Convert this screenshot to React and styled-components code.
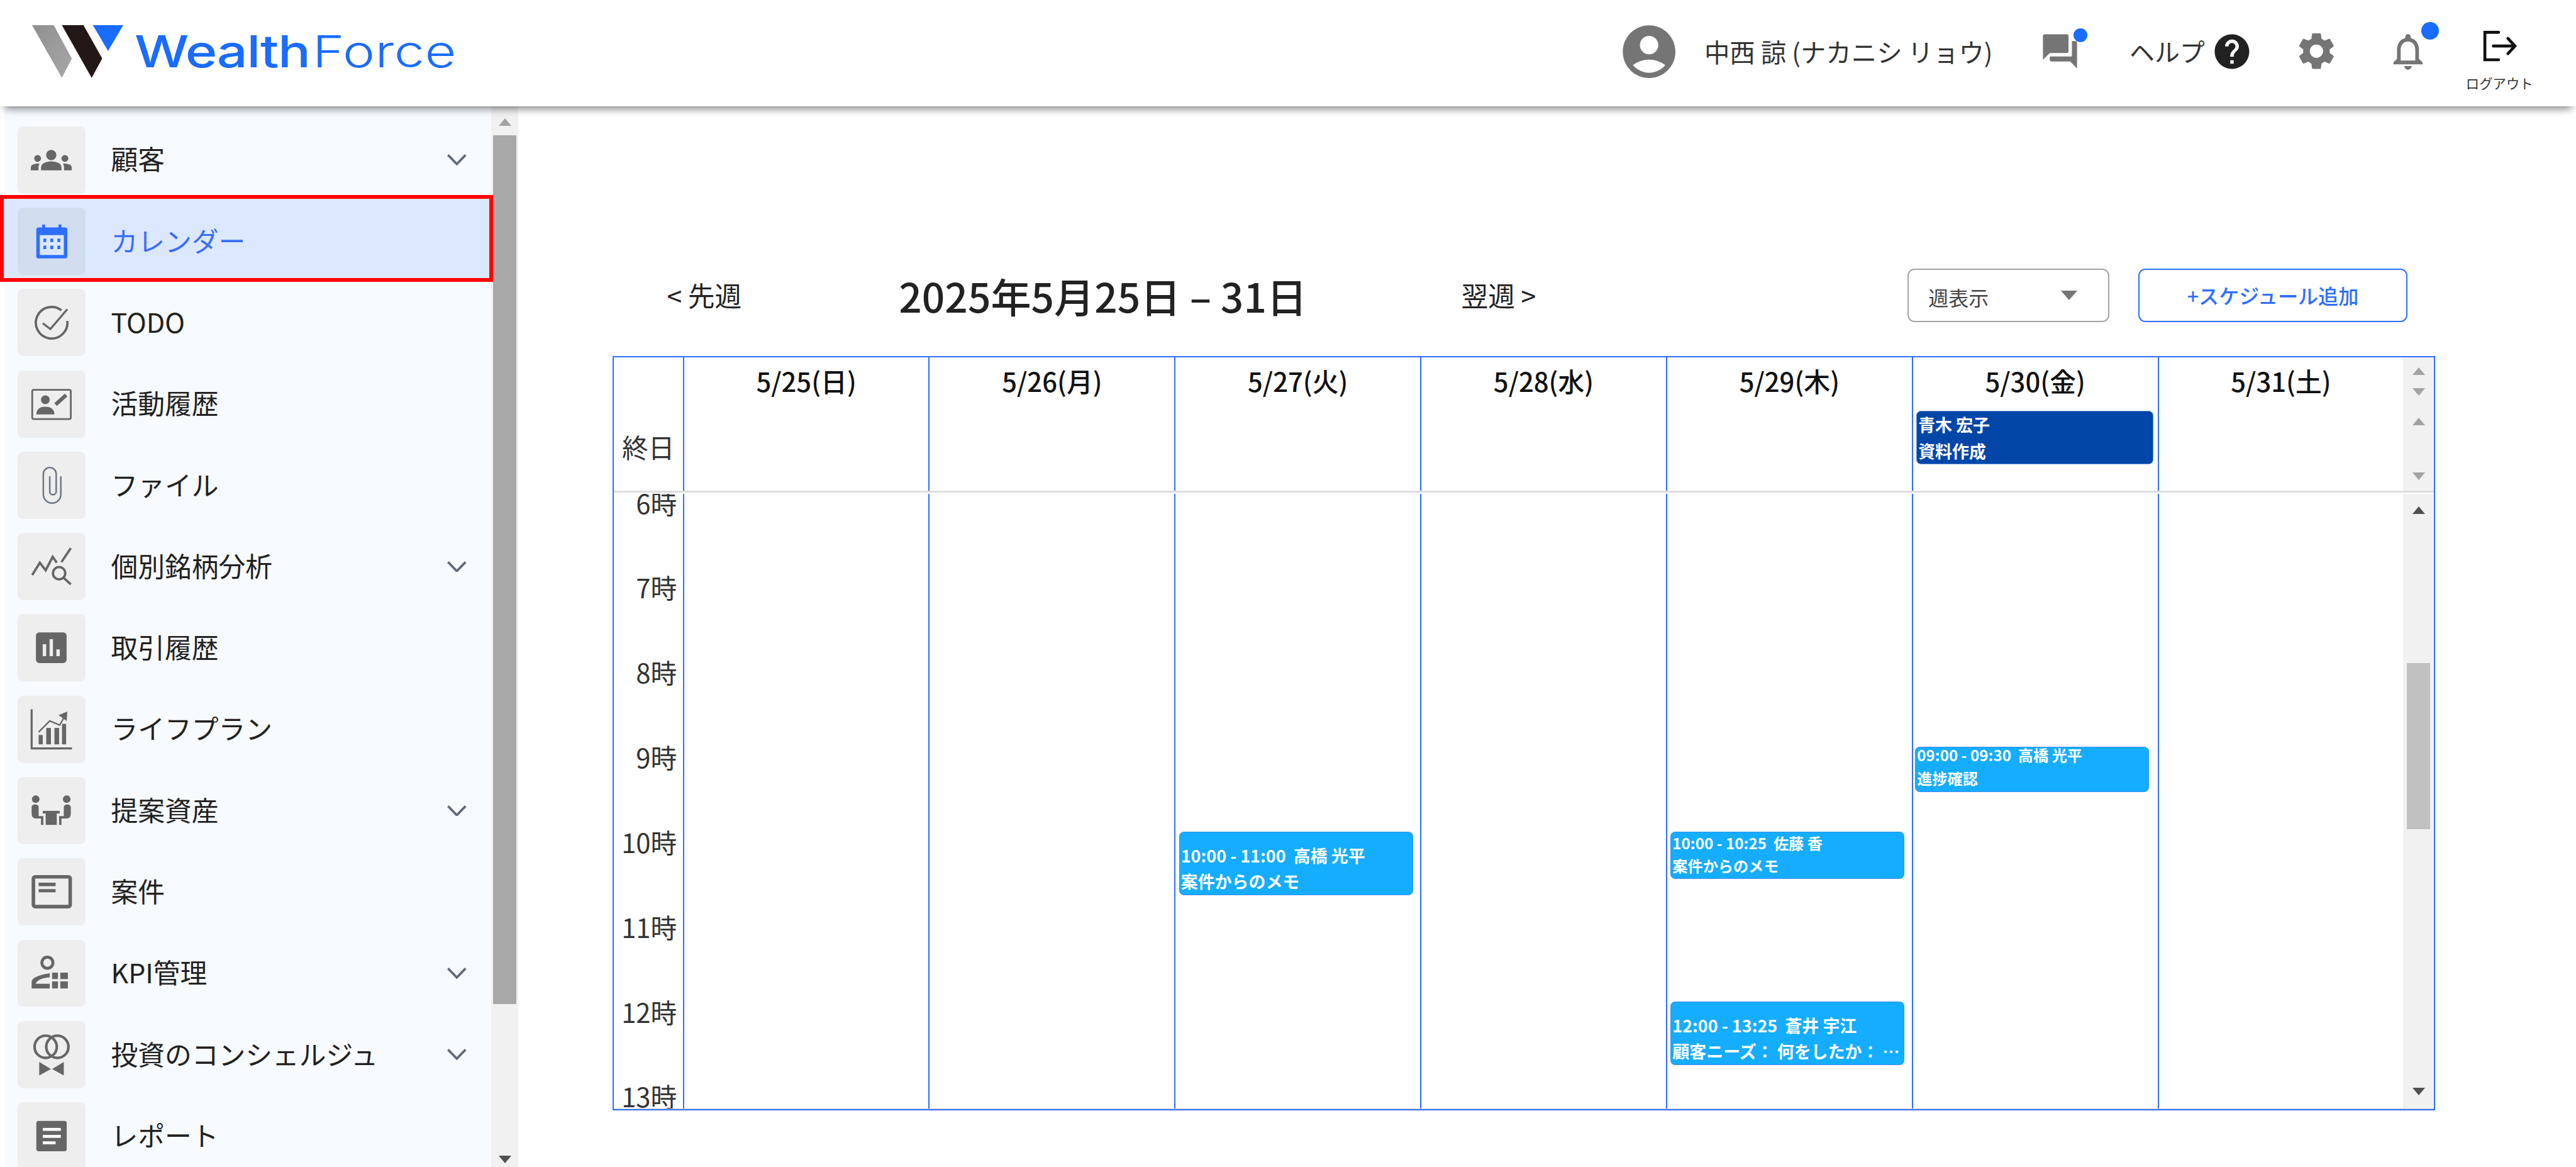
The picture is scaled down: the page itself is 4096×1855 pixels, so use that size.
import React from "react";
import styled, { createGlobalStyle } from "styled-components";
import { MdAccountCircle, MdAssessment, MdGroups, MdHelp, MdNotificationsNone, MdQuestionAnswer, MdSettings } from "react-icons/md";

const Global = createGlobalStyle`
  html, body { margin: 0; padding: 0; background: #fff; overflow: hidden; }
  * { box-sizing: border-box; }
`;

const FONT = `"Noto Sans CJK JP", "Noto Sans", sans-serif`;
const BLUE = "#2f6fff";

const Page = styled.div`
  zoom: 0.92942;
  width: 4407px;
  height: 1996px;
  display: flex;
  flex-direction: column;
  overflow: hidden;
  background: #fff;
  color: #212121;
  font-family: ${FONT};
`;

const Header = styled.header`
  position: relative;
  z-index: 3;
  flex: 0 0 182px;
  height: 182px;
  display: flex;
  align-items: center;
  padding: 0 74px 6px 55px;
  background: #fff;
  box-shadow: 0 11px 14px -8px rgba(0, 0, 0, 0.55);
`;

const Logo = styled.div`
  display: flex;
  align-items: center;
  height: 90px;
`;

const LogoName = styled.div`
  margin-left: 19px;
  font-family: Inter, sans-serif;
  font-size: 76px;
  line-height: 90px;
  color: #1a6cff;
  font-weight: 500;
  letter-spacing: -1.2px;
  white-space: nowrap;
  transform: scaleX(1.22);
  transform-origin: left center;
  span { font-weight: 300; letter-spacing: 0.5px; margin-left: 4px; }
`;

const HeaderRight = styled.div`
  margin-left: auto;
  display: flex;
  align-items: center;
  height: 100%;
`;

const UserName = styled.div`
  margin-left: 40px;
  font-size: 43.5px;
  line-height: 60px;
  color: #333;
  white-space: pre;
`;

const HeaderIcon = styled.div`
  position: relative;
  display: flex;
  margin-left: ${(p) => p.$ml || 0}px;
  color: ${(p) => p.$color || "#757575"};
`;

const Dot = styled.span`
  position: absolute;
  left: ${(p) => p.$x}px;
  top: ${(p) => p.$y}px;
  width: ${(p) => p.$size}px;
  height: ${(p) => p.$size}px;
  border-radius: 50%;
  background: #1a6cff;
`;

const HelpText = styled.div`
  margin-left: 84px;
  font-size: 43px;
  line-height: 60px;
  color: #333;
`;

const Logout = styled.div`
  align-self: flex-start;
  margin: 53px 0 0 62px;
  width: 114px;
  display: flex;
  flex-direction: column;
  align-items: center;
  svg { display: block; }
`;

const LogoutText = styled.div`
  margin-top: 23px;
  font-size: 23px;
  line-height: 28px;
  color: #333;
  white-space: nowrap;
`;

const Body = styled.div`
  flex: 1;
  display: flex;
  min-height: 0;
`;

const Sidebar = styled.aside`
  flex: 0 0 887px;
  display: flex;
  min-height: 0;
`;

const Nav = styled.nav`
  flex: 0 0 844px;
  overflow: hidden;
  padding-top: 22px;
  background: linear-gradient(90deg, #fff 7px, #f7faff 7px, #f7faff 840px, #f1f1f1 840px);
`;

const Row = styled.div`
  position: relative;
  height: 139.1px;
  display: flex;
  align-items: center;
  padding: 0 46px 0 30px;
  font-size: 46px;
  color: ${(p) => (p.$active ? "#3b6ff5" : "#212121")};
  background: ${(p) => (p.$active ? "#dce8ff" : "transparent")};
  ${(p) =>
    p.$active &&
    `&::after {
      content: "";
      position: absolute;
      inset: -10px 0 0 0;
      border: 7px solid #ff0000;
      background: transparent;
    }
    &::before {
      content: "";
      position: absolute;
      inset: -10px 0 0 0;
      background: #dce8ff;
    }`}
`;

const IconBox = styled.div`
  position: relative;
  z-index: 1;
  flex: 0 0 116px;
  height: 115px;
  border-radius: 9px;
  background: ${(p) => (p.$active ? "#d3ddf0" : "#eeeeee")};
  display: flex;
  align-items: center;
  justify-content: center;
  color: #666;
  svg { display: block; }
`;

const Label = styled.div`
  position: relative;
  z-index: 1;
  margin: -4px 0 0 44px;
  flex: 1;
  white-space: nowrap;
  line-height: 60px;
`;

const Track = styled.div`
  flex: ${(p) => (p.$w ? `0 0 ${p.$w}px` : "1")};
  display: flex;
  flex-direction: column;
  align-items: center;
  background: #f1f1f1;
  padding-top: ${(p) => p.$pt || 0}px;
  padding-bottom: ${(p) => p.$pb || 0}px;
  padding-right: ${(p) => p.$pr || 0}px;
`;

const Arrow = styled.span`
  flex: none;
  width: 0;
  height: 0;
  margin-top: ${(p) => p.$mt || 0}px;
  border-left: 11px solid transparent;
  border-right: 11px solid transparent;
  ${(p) => (p.$down ? "border-top" : "border-bottom")}: 13px solid ${(p) => (p.$dark ? "#505050" : "#a3a3a3")};
`;

const Thumb = styled.div`
  flex: none;
  width: ${(p) => p.$w}px;
  height: ${(p) => p.$h}px;
  margin-top: ${(p) => p.$mt}px;
  margin-bottom: auto;
  background: ${(p) => p.$color};
`;

const Main = styled.main`
  flex: 1;
  min-width: 0;
  padding: 277px 0 0 161px;
  background: #fff;
`;

const Toolbar = styled.div`
  width: 3071px;
  height: 92px;
  padding-left: 93px;
  display: flex;
  align-items: center;
`;

const WeekLink = styled.div`
  flex: none;
  margin-left: ${(p) => p.$ml || 0}px;
  font-size: 46px;
  line-height: 60px;
  color: #222;
  white-space: pre;
`;

const Title = styled.h1`
  flex: none;
  margin: 0 0 0 269px;
  font-size: 69px;
  font-weight: 500;
  line-height: 92px;
  color: #222;
  white-space: pre;
`;

const Select = styled.div`
  margin-left: auto;
  position: relative;
  width: 346px;
  height: 92px;
  padding: 6px 0 0 34px;
  display: flex;
  align-items: center;
  border: 3px solid #a3a3a3;
  border-radius: 12px;
  font-size: 34.5px;
  color: #444;
`;

const SelectCaret = styled.span`
  position: absolute;
  left: 261px;
  top: 36px;
  width: 0;
  height: 0;
  border-left: 15px solid transparent;
  border-right: 15px solid transparent;
  border-top: 17px solid #757575;
`;

const AddButton = styled.button`
  margin-left: 49px;
  width: 461px;
  height: 92px;
  padding: 0;
  border: 3px solid ${BLUE};
  border-radius: 12px;
  background: #fff;
  color: ${BLUE};
  font-family: ${FONT};
  font-size: 34.5px;
  font-weight: 500;
`;

const Calendar = styled.div`
  margin-top: 58px;
  width: 3118px;
  height: 1290px;
  display: flex;
  flex-direction: column;
  border: 3px solid ${BLUE};
`;

const HeadRow = styled.div`
  flex: 0 0 228px;
  display: grid;
  grid-template-columns: 118px repeat(7, 420.5px) 1fr;
`;

const HeadRule = styled.div`
  flex: 0 0 6px;
  border-top: 4px solid #dddddd;
`;

const AllDay = styled.div`
  display: flex;
  align-items: flex-end;
  padding: 0 0 45px 14px;
  font-size: 45px;
  line-height: 60px;
  color: #333;
`;

const DayHead = styled.div`
  border-left: 3px solid ${BLUE};
  padding-top: 10px;
`;

const DayName = styled.div`
  text-align: center;
  font-size: 45px;
  font-weight: 500;
  line-height: 60px;
  color: #111;
`;

const BodyGrid = styled.div`
  flex: 1;
  min-height: 0;
  overflow: hidden;
  display: grid;
  grid-template-columns: 118px repeat(7, 420.5px) 1fr;
  grid-template-rows: minmax(0, 1fr);
  border-bottom: 2px solid #cccccc;
`;

const Hours = styled.div`
  margin-top: -58px;
`;

const Hour = styled.div`
  height: 145.1px;
  line-height: 145px;
  padding-right: 10px;
  text-align: right;
  font-size: 45px;
  color: #333;
`;

const DayCol = styled.div`
  position: relative;
  border-left: 3px solid ${BLUE};
`;

const Event = styled.div`
  position: ${(p) => (p.$flow ? "static" : "absolute")};
  left: ${(p) => p.$left}px;
  top: ${(p) => p.$top}px;
  width: ${(p) => p.$w}px;
  height: ${(p) => p.$h}px;
  ${(p) => p.$flow && `margin: 22px 0 0 6px;`}
  padding-left: 2px;
  border: 2px solid ${(p) => (p.$dark ? "#5c8fe0" : "#3f8df2")};
  border-radius: 8px;
  background: ${(p) => (p.$dark ? "#0246a8" : "#14adff")};
  color: #fff;
  font-weight: 700;
  font-size: ${(p) => p.$fs}px;
  line-height: ${(p) => p.$lh}px;
`;

const EventText = styled.div`
  margin-top: ${(p) => p.$off}px;
  white-space: pre;
`;

const Chevron = () => (
  <svg width="33" height="19" viewBox="0 0 33 19" fill="none" stroke="#5f6b7a" strokeWidth="4">
    <polyline points="1.5,1.5 16.5,17 31.5,1.5" />
  </svg>
);

const G = "#666";
const Box = ({ children }) => <svg width="116" height="115" viewBox="0 0 116 115">{children}</svg>;

const icons = {
  people: <MdGroups size={70} />,
  calendar: (
    <Box>
      <rect x="42" y="29" width="5" height="9" fill={BLUE} />
      <rect x="70" y="29" width="5" height="9" fill={BLUE} />
      <rect x="32" y="34" width="53" height="53" rx="4" fill={BLUE} />
      <rect x="38" y="47" width="41" height="34" fill="#dce8ff" />
      {[44, 56, 68].map((x) => [53, 65].map((y) => <rect key={x + "-" + y} x={x} y={y} width="5" height="6" fill={BLUE} />))}
    </Box>
  ),
  todo: (
    <Box>
      <path d="M75 37A27 27 0 1 0 85 55" fill="none" stroke={G} strokeWidth="4" />
      <polyline points="43,59 56,69 85,35" fill="none" stroke={G} strokeWidth="3.5" />
    </Box>
  ),
  history: (
    <Box>
      <rect x="25" y="33" width="66" height="50" rx="2.5" fill="none" stroke={G} strokeWidth="3" />
      <circle cx="47.5" cy="50" r="7.5" fill={G} />
      <path d="M32 75C32 65 40 62 47.5 62S63 65 63 75Z" fill={G} />
      <line x1="65" y1="58" x2="83" y2="42" stroke={G} strokeWidth="6.5" />
    </Box>
  ),
  file: (
    <Box>
      <path d="M74 42V73A15 15 0 0 1 44 73V38A11 11 0 0 1 66 38V68A5.5 5.5 0 0 1 55 68V42" fill="none" stroke="#6b7480" strokeWidth="2.6" />
    </Box>
  ),
  analysis: (
    <Box>
      <g fill="none" stroke={G} strokeWidth="4">
        <polyline points="25,72 38,51 48,64 60,41 67,51" />
        <line x1="75" y1="50" x2="91" y2="26" />
        <circle cx="71" cy="69" r="10.5" />
        <line x1="79" y1="77" x2="91" y2="88" />
      </g>
    </Box>
  ),
  trades: <MdAssessment size={70} />,
  lifeplan: (
    <Box>
      <polyline points="24,23 24,90 93,90" fill="none" stroke={G} strokeWidth="3.5" />
      <rect x="36" y="67" width="7" height="16" fill={G} />
      <rect x="49" y="55" width="8" height="28" fill={G} />
      <rect x="63" y="55" width="8" height="28" fill={G} />
      <rect x="76" y="48" width="7" height="35" fill={G} />
      <polyline points="36,62 55,43 72,50 82,33" fill="none" stroke="#eee" strokeWidth="6" />
      <polyline points="36,62 55,43 72,50 80,36" fill="none" stroke={G} strokeWidth="2.5" />
      <polygon points="70,33 85,27 84,43" fill={G} />
    </Box>
  ),
  proposal: (
    <Box>
      <circle cx="31" cy="38" r="6.5" fill={G} />
      <circle cx="84" cy="38" r="6.5" fill={G} />
      <path d="M24 52Q24 47 30 47Q36 47 36 52V67H44V82H40V71H31Q24 71 24 63Z" fill={G} />
      <path d="M91 52Q91 47 85 47Q79 47 79 52V67H71V82H75V71H84Q91 71 91 63Z" fill={G} />
      <rect x="43" y="58" width="29" height="4.5" fill={G} />
      <rect x="48" y="62" width="19" height="20" fill={G} />
    </Box>
  ),
  deals: (
    <Box>
      <rect x="27" y="32" width="63" height="51" rx="3" fill="none" stroke={G} strokeWidth="6" />
      <rect x="36" y="42" width="29" height="6" fill={G} />
      <rect x="36" y="53" width="29" height="5.5" fill={G} />
    </Box>
  ),
  kpi: (
    <Box>
      <circle cx="51" cy="39" r="9.5" fill="none" stroke={G} strokeWidth="5" />
      <path d="M24 83V72Q24 62 55 57V64Q34 66 31 75H55V83Z" fill={G} />
      <rect x="59" y="56" width="10" height="11" fill={G} />
      <rect x="73" y="56" width="13" height="11" fill={G} />
      <rect x="59" y="71" width="10" height="12" fill={G} />
      <rect x="73" y="71" width="13" height="12" fill={G} />
    </Box>
  ),
  concierge: (
    <Box>
      <circle cx="48" cy="44" r="19" fill="none" stroke={G} strokeWidth="4.5" />
      <circle cx="68" cy="44" r="19" fill="none" stroke={G} strokeWidth="4.5" />
      <polygon points="37,70 37,93 57,82" fill={G} />
      <polygon points="79,70 79,93 59,82" fill={G} />
    </Box>
  ),
  report: (
    <Box>
      <rect x="32" y="32" width="52" height="52" rx="4" fill={G} />
      <rect x="43" y="44" width="31" height="5" fill="#fff" />
      <rect x="43" y="56" width="31" height="5" fill="#fff" />
      <rect x="43" y="67" width="22" height="5" fill="#fff" />
    </Box>
  ),
};

const menu = [
  ["people", "顧客", true],
  ["calendar", "カレンダー", false, true],
  ["todo", "TODO"],
  ["history", "活動履歴"],
  ["file", "ファイル"],
  ["analysis", "個別銘柄分析", true],
  ["trades", "取引履歴"],
  ["lifeplan", "ライフプラン"],
  ["proposal", "提案資産", true],
  ["deals", "案件"],
  ["kpi", "KPI管理", true],
  ["concierge", "投資のコンシェルジュ", true],
  ["report", "レポート"],
];

const days = ["5/25(日)", "5/26(月)", "5/27(火)", "5/28(水)", "5/29(木)", "5/30(金)", "5/31(土)"];
const hours = [6, 7, 8, 9, 10, 11, 12, 13];

const events = {
  2: [{ left: 6, top: 577, w: 400, h: 109, fs: 29, lh: 44, off: 19, lines: ["10:00 - 11:00  高橋 光平", "案件からのメモ"] }],
  4: [
    { left: 6, top: 577, w: 400, h: 81, fs: 26, lh: 39, off: -1, lines: ["10:00 - 10:25  佐藤 香", "案件からのメモ"] },
    { left: 6, top: 868, w: 400, h: 108, fs: 29, lh: 44, off: 18, lines: ["12:00 - 13:25  蒼井 宇江", "顧客ニーズ： 何をしたか： …"] },
  ],
  5: [{ left: 4, top: 432, w: 400, h: 78, fs: 26, lh: 39, off: -6, lines: ["09:00 - 09:30  高橋 光平", "進捗確認"] }],
};

export default function App() {
  return (
    <Page>
      <Global />
      <Header>
        <Logo>
          <svg width="156" height="90" viewBox="55 43 156 90">
            <defs>
              <linearGradient id="lg" x1="0" y1="0" x2="1" y2="1">
                <stop offset="0" stopColor="#8f8f8f" />
                <stop offset="1" stopColor="#a8a8a8" />
              </linearGradient>
            </defs>
            <polygon points="55,43 92,43 123,100 106,133" fill="url(#lg)" />
            <polygon points="106,43 143,43 175,100 157,133" fill="#231815" />
            <polygon points="159,43 211,43 185,87" fill="#1a6cff" />
          </svg>
          <LogoName>Wealth<span>Force</span></LogoName>
        </Logo>
        <HeaderRight>
          <HeaderIcon><MdAccountCircle size={108} /></HeaderIcon>
          <UserName>中西 諒 (ナカニシ リョウ)</UserName>
          <HeaderIcon $ml={80}>
            <MdQuestionAnswer size={70} />
            <Dot $x={58} $y={-5} $size={24} />
          </HeaderIcon>
          <HelpText>ヘルプ</HelpText>
          <HeaderIcon $ml={11} $color="#212121"><MdHelp size={71} /></HeaderIcon>
          <HeaderIcon $ml={71}><MdSettings size={76} /></HeaderIcon>
          <HeaderIcon $ml={81}>
            <MdNotificationsNone size={75} />
            <Dot $x={60} $y={-13} $size={30} />
          </HeaderIcon>
          <Logout>
            <svg width="60" height="52" viewBox="0 0 60 52" fill="none" stroke="#111" strokeWidth="5" strokeLinecap="round">
              <path d="M29 2.5H5.5V49.5H29" />
              <path d="M20 26H56M45 13L57 26L45 39" />
            </svg>
            <LogoutText>ログアウト</LogoutText>
          </Logout>
        </HeaderRight>
      </Header>
      <Body>
        <Sidebar>
          <Nav>
            {menu.map(([icon, label, chevron, active]) => (
              <Row key={label} $active={active}>
                <IconBox $active={active}>{icons[icon]}</IconBox>
                <Label>{label}</Label>
                {chevron && <Chevron />}
              </Row>
            ))}
          </Nav>
          <Track $pt={20} $pb={7} $pr={4}>
            <Arrow />
            <Thumb $w={39} $h={1486} $mt={16} $color="#a8a8a8" />
            <Arrow $down $dark />
          </Track>
        </Sidebar>
        <Main>
          <Toolbar>
            <WeekLink>&lt; 先週</WeekLink>
            <Title>2025年5月25日 – 31日</Title>
            <WeekLink $ml={264}>翌週 &gt;</WeekLink>
            <Select>週表示<SelectCaret /></Select>
            <AddButton>+スケジュール追加</AddButton>
          </Toolbar>
          <Calendar>
            <HeadRow>
              <AllDay>終日</AllDay>
              {days.map((d, i) => (
                <DayHead key={d}>
                  <DayName>{d}</DayName>
                  {i === 5 && (
                    <Event $flow $dark $w={405} $h={91} $fs={29} $lh={45}>
                      <EventText $off={0}>青木 宏子{"\n"}資料作成</EventText>
                    </Event>
                  )}
                </DayHead>
              ))}
              <Track $pt={17}>
                <Arrow />
                <Arrow $down $mt={23} />
                <Arrow $mt={37} />
                <Arrow $down $mt={81} />
              </Track>
            </HeadRow>
            <HeadRule />
            <BodyGrid>
              <Hours>
                {hours.map((h) => <Hour key={h}>{h}時</Hour>)}
              </Hours>
              {days.map((d, i) => (
                <DayCol key={d}>
                  {(events[i] || []).map((e) => (
                    <Event key={e.lines[0]} $left={e.left} $top={e.top} $w={e.w} $h={e.h} $fs={e.fs} $lh={e.lh}>
                      <EventText $off={e.off}>{e.lines.join("\n")}</EventText>
                    </Event>
                  ))}
                </DayCol>
              ))}
              <Track $pt={21} $pb={23}>
                <Arrow $dark />
                <Thumb $w={40} $h={284} $mt={255} $color="#c1c1c1" />
                <Arrow $down $dark />
              </Track>
            </BodyGrid>
          </Calendar>
        </Main>
      </Body>
    </Page>
  );
}
